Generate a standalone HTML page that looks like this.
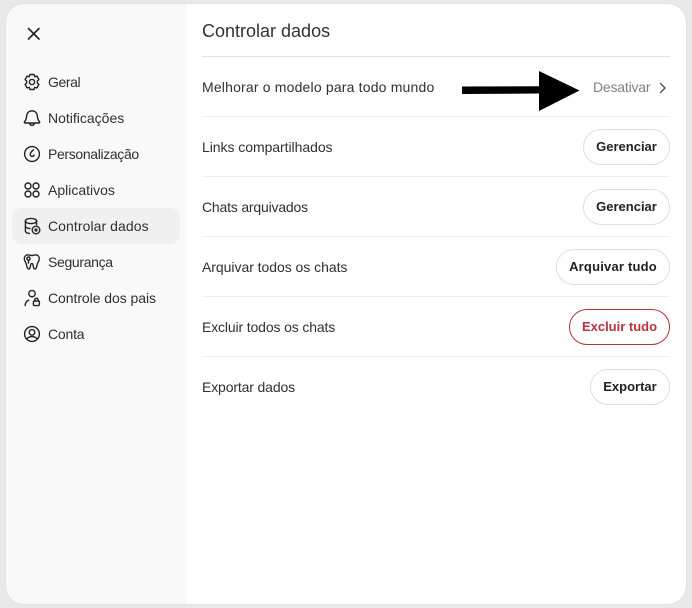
<!DOCTYPE html>
<html lang="pt"><head><meta charset="utf-8"><style>
html,body{margin:0;padding:0;width:692px;height:608px;overflow:hidden;background:#e9e9e9;font-family:"Liberation Sans",sans-serif;color:#0d0d0d}
#card{position:absolute;left:6px;top:4px;width:680px;height:600px;border-radius:18px;background:#fff;overflow:hidden;box-shadow:0 0 1px #bbb}
.a{position:absolute;white-space:nowrap;font-size:14px;line-height:20px;color:#303030}
.i{position:absolute;left:23px;width:18px;height:18px;fill:none;stroke:#222;stroke-width:1.4;stroke-linecap:round;stroke-linejoin:round}
.hl{position:absolute;left:12px;top:208px;width:168px;height:36px;border-radius:10px;background:#f0f0f0}
.l{position:absolute;left:202px;width:468px;height:1px;background:#f0f0f0}
.b{position:absolute;height:34px;line-height:34px;border:1px solid #dedede;border-radius:18px;background:#fff;text-align:center;font-size:13px;font-weight:bold;color:#222;white-space:nowrap}
</style></head><body>
<div id="card"></div>
<div style="position:absolute;left:6px;top:4px;width:180px;height:600px;background:#f9f9f9;border-radius:18px 0 0 18px"></div>
<div class="hl"></div>
<svg class="i" style="left:25px;top:25px" viewBox="0 0 18 18"><path d="M3.500 3.500L14 14M14 3.500L3.500 14" stroke-width="1.600"/></svg>
<svg class="i" style="top:73px" viewBox="0 0 18 18"><path d="M7 1.500h4l.7 2.200 2.200-.6 2 3.400-1.600 1.600 0 1.800 1.600 1.600-2 3.400-2.200-.6-.7 2.200H7l-.7-2.200-2.200.6-2-3.400 1.600-1.600 0-1.800-1.600-1.600 2-3.400 2.200.6z"/><circle cx="9" cy="9" r="2.600"/></svg>
<svg class="i" style="top:109px" viewBox="0 0 18 18"><path d="M9 1.800c-3.400 0-5.300 2.600-5.400 5.500-.1 2.500-.9 4-2.100 5.500-.4.600 0 1.200.6 1.200h13.800c.6 0 1-.6.6-1.200-1.200-1.500-2-3-2.100-5.500C14.300 4.400 12.400 1.800 9 1.800zM6.500 14.200c.3 1.300 1.200 2.100 2.500 2.100s2.200-.8 2.500-2.100"/></svg>
<svg class="i" style="top:145px" viewBox="0 0 18 18"><circle cx="9" cy="9" r="7.400"/><path d="M10.500 4.800c-1.600 1.300-3.300 3-3.300 4.700 0 1.200.9 1.900 1.900 1.900s1.700-.5 2-1.300"/></svg>
<svg class="i" style="top:181px" viewBox="0 0 18 18"><circle cx="5" cy="5" r="3"/><circle cx="13" cy="5" r="3"/><circle cx="5" cy="13" r="3"/><circle cx="13" cy="13" r="3"/></svg>
<svg class="i" style="top:217px" viewBox="0 0 18 18"><ellipse cx="8" cy="4" rx="5.600" ry="2.600"/><path d="M2.400 4v10c0 1.300 1.400 2.200 4 2.400M13.600 4v3.600M2.400 9c0 1.300 1.800 2.400 4.600 2.500"/><circle cx="13" cy="13" r="3.800"/><circle cx="13" cy="13" r=".9"/></svg>
<svg class="i" style="top:253px" viewBox="0 0 18 18"><path d="M5 1.800c-2.300 0-3.700 1.800-3.700 4 0 2.300 1.700 3.500 2.200 6 .3 1.800.7 4.200 2.300 4.200 1.700 0 1.300-3 2-4.800.3-.8 1.700-.8 2 0 .7 1.800.4 4.800 2 4.800 1.600 0 2-2.400 2.300-4.200.5-2.500 2.200-3.700 2.200-6 0-2.200-1.400-4-3.700-4-1.400 0-2.300.7-3.600.7S6.400 1.800 5 1.800z"/><circle cx="5.500" cy="5.500" r="1.600"/><path d="M5.500 7.100v3"/></svg>
<svg class="i" style="top:289px" viewBox="0 0 18 18"><circle cx="9" cy="4.600" r="3.200"/><path d="M2.200 16.500c0-2.500 1.400-4.500 3.600-5.300"/><rect x="10.400" y="12" width="6" height="4.600" rx="1.200"/><path d="M11.700 12v-1c0-2.200 3.400-2.200 3.400 0v1"/></svg>
<svg class="i" style="top:325px" viewBox="0 0 18 18"><circle cx="9" cy="9" r="7.400"/><circle cx="9" cy="7.400" r="2.800"/><path d="M4 13.800c1.200-1.500 3-2.200 5-2.200s3.800.7 5 2.200"/></svg>
<div class="a" style="left:48px;top:72px;letter-spacing:-.4px">Geral</div>
<div class="a" style="left:48px;top:108px">Notificações</div>
<div class="a" style="left:48px;top:144px;letter-spacing:-.35px">Personalização</div>
<div class="a" style="left:48px;top:180px">Aplicativos</div>
<div class="a" style="left:48px;top:216px;letter-spacing:.07px">Controlar dados</div>
<div class="a" style="left:48px;top:252px;letter-spacing:-.33px">Segurança</div>
<div class="a" style="left:48px;top:288px;letter-spacing:-.06px">Controle dos pais</div>
<div class="a" style="left:48px;top:324px;letter-spacing:-.2px">Conta</div>
<div class="a" style="left:202px;top:19px;font-size:18px;line-height:24px;color:#333">Controlar dados</div>
<div class="l" style="top:56px;background:#e3e3e3"></div>
<div class="l" style="top:116px"></div><div class="l" style="top:176px"></div><div class="l" style="top:236px"></div><div class="l" style="top:296px"></div><div class="l" style="top:356px"></div>
<div class="a" style="left:202px;top:77px;letter-spacing:.18px">Melhorar o modelo para todo mundo</div>
<div class="a" style="left:202px;top:137px;letter-spacing:-.05px">Links compartilhados</div>
<div class="a" style="left:202px;top:197px;letter-spacing:-.19px">Chats arquivados</div>
<div class="a" style="left:202px;top:257px;letter-spacing:-.04px">Arquivar todos os chats</div>
<div class="a" style="left:202px;top:317px;letter-spacing:-.14px">Excluir todos os chats</div>
<div class="a" style="left:202px;top:377px;letter-spacing:-.14px">Exportar dados</div>
<div class="a" style="left:593px;top:77px;color:#808080;letter-spacing:-.2px">Desativar</div>
<svg style="position:absolute;left:656px;top:81px" width="12" height="14" viewBox="0 0 12 14" fill="none" stroke="#555" stroke-width="1.400" stroke-linecap="round" stroke-linejoin="round"><path d="M4.500 2.500L9 7L4.500 11.500"/></svg>
<svg style="position:absolute;left:460px;top:68px" width="122" height="44" viewBox="0 0 122 44"><path d="M2 18.500L79 18.200V3L119.500 22.500 79 43V25.500L2 26z" fill="#000"/></svg>
<div class="b" style="left:583px;top:129px;width:85px">Gerenciar</div>
<div class="b" style="left:583px;top:189px;width:85px">Gerenciar</div>
<div class="b" style="left:556px;top:249px;width:112px;letter-spacing:.2px">Arquivar tudo</div>
<div class="b" style="left:569px;top:309px;width:99px;border-color:#b3343a;color:#b3343a">Excluir tudo</div>
<div class="b" style="left:590px;top:369px;width:78px">Exportar</div>
</body></html>
